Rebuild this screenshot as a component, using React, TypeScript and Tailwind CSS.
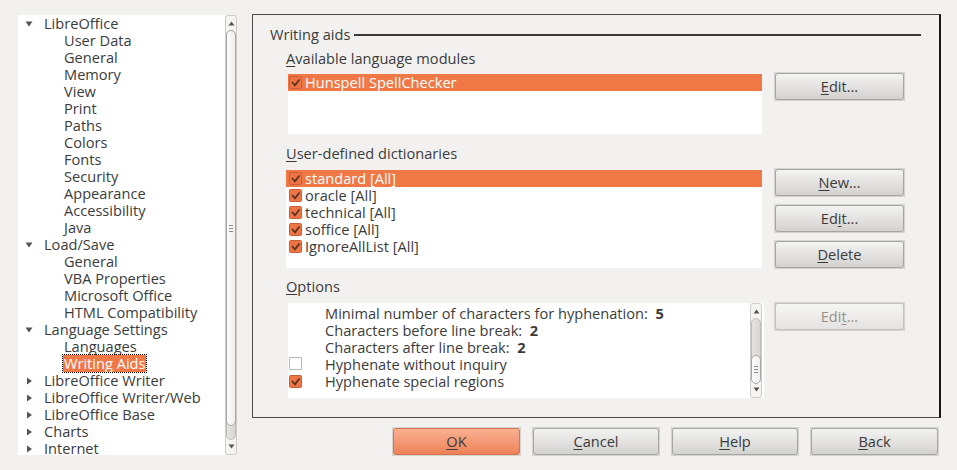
import React from 'react';

type TreeItem = { label: string; level: 1 | 2; open?: boolean; selected?: boolean };

const tree: TreeItem[] = [
  { label: 'LibreOffice', level: 1, open: true },
  { label: 'User Data', level: 2 },
  { label: 'General', level: 2 },
  { label: 'Memory', level: 2 },
  { label: 'View', level: 2 },
  { label: 'Print', level: 2 },
  { label: 'Paths', level: 2 },
  { label: 'Colors', level: 2 },
  { label: 'Fonts', level: 2 },
  { label: 'Security', level: 2 },
  { label: 'Appearance', level: 2 },
  { label: 'Accessibility', level: 2 },
  { label: 'Java', level: 2 },
  { label: 'Load/Save', level: 1, open: true },
  { label: 'General', level: 2 },
  { label: 'VBA Properties', level: 2 },
  { label: 'Microsoft Office', level: 2 },
  { label: 'HTML Compatibility', level: 2 },
  { label: 'Language Settings', level: 1, open: true },
  { label: 'Languages', level: 2 },
  { label: 'Writing Aids', level: 2, selected: true },
  { label: 'LibreOffice Writer', level: 1 },
  { label: 'LibreOffice Writer/Web', level: 1 },
  { label: 'LibreOffice Base', level: 1 },
  { label: 'Charts', level: 1 },
  { label: 'Internet', level: 1 },
];

const dictionaries = ['standard [All]', 'oracle [All]', 'technical [All]', 'soffice [All]', 'IgnoreAllList [All]'];

function Arrow({ open }: { open?: boolean }) {
  return open ? (
    <svg width="8" height="8" viewBox="0 0 8 8" className="absolute left-[7px] top-[5px]">
      <path d="M0.5 1.5 L7.5 1.5 L4 6.5 Z" fill="#555" />
    </svg>
  ) : (
    <svg width="8" height="8" viewBox="0 0 8 8" className="absolute left-[8px] top-[5px]">
      <path d="M1 0.5 L6 4 L1 7.5 Z" fill="#555" />
    </svg>
  );
}

function Check({ checked = true }: { checked?: boolean }) {
  if (!checked) {
    return (
      <span className="inline-block w-[13px] h-[13px] border border-[#b8b8b8] bg-white rounded-[1px]" />
    );
  }
  return (
    <svg width="13" height="13" viewBox="0 0 13 13" className="block">
      <rect x="0.5" y="0.5" width="12" height="12" rx="1" fill="#ee7446" stroke="#c8613a" />
      <path d="M3 6 L6 9.3 L10.5 3.5" fill="none" stroke="#5b3322" strokeWidth="1.8" />
    </svg>
  );
}

function Button({
  children,
  w = 'w-[131px]',
  primary,
  disabled,
}: {
  children: React.ReactNode;
  w?: string;
  primary?: boolean;
  disabled?: boolean;
}) {
  const inner = primary
    ? 'bg-gradient-to-b from-[#f9b091] to-[#ee8158] border-[#d57550] text-[#3c3c3c]'
    : disabled
    ? 'bg-gradient-to-b from-[#f5f5f4] to-[#e4e3e2] border-[#c4c4c4] text-[#9a8f88]'
    : 'bg-gradient-to-b from-[#f3f3f2] to-[#d3d2d1] border-[#a5a5a5] text-[#3c3c3c]';
  return (
    <div className={`${w} h-[29px] p-px bg-[#d3d3d2]`}>
      <div className={`h-full rounded-[3px] border flex items-center justify-center ${inner}`}>
        {children}
      </div>
    </div>
  );
}

function VScroll({ thumbTop, thumbH }: { thumbTop: string; thumbH: string }) {
  return (
    <div className="relative w-[12px] h-full bg-[#f5f4f3] border border-[#cdcccb] rounded-[3px]">
      <svg width="7" height="5" viewBox="0 0 7 5" className="absolute left-[2px] top-[5px]">
        <path d="M0.5 4.5 L3.5 0.5 L6.5 4.5 Z" fill="#555" />
      </svg>
      <svg width="7" height="5" viewBox="0 0 7 5" className="absolute left-[2px] bottom-[5px]">
        <path d="M0.5 0.5 L3.5 4.5 L6.5 0.5 Z" fill="#555" />
      </svg>
      <div className="absolute left-0 right-0 top-[14px] bottom-[14px] bg-gradient-to-r from-[#e4e3e1] to-[#d7d6d4] rounded-full border border-[#bdbcba]" />
      <div
        className={`absolute left-0 right-0 ${thumbTop} ${thumbH} bg-gradient-to-r from-[#fbfbfb] to-[#efefee] rounded-full border border-[#a9a8a6] flex items-center justify-center`}
      >
        <div className="flex flex-col gap-[2px]">
          <div className="w-[4px] h-px bg-[#8c8c8c]" />
          <div className="w-[4px] h-px bg-[#8c8c8c]" />
          <div className="w-[4px] h-px bg-[#8c8c8c]" />
        </div>
      </div>
    </div>
  );
}

export default function App() {
  return (
    <div className="w-[957px] h-[470px] bg-[#f2f1f0] flex font-['Open_Sans',sans-serif] text-[14.6px] leading-[17px] text-[#3c3c3c] overflow-hidden">
      {/* tree */}
      <div className="pt-[15px] pl-[18px]">
        <div className="flex w-[219px] h-[440px]">
          <div className="w-[207px] h-full bg-white overflow-hidden">
            {tree.map((t, i) => (
              <div key={i} className="relative h-[17px] whitespace-nowrap">
                {t.level === 1 && <Arrow open={t.open} />}
                <span
                  className={`absolute top-0 ${t.level === 1 ? 'left-[26px]' : 'left-[46px]'} ${
                    t.selected ? 'bg-[#f07746] text-white outline outline-1 outline-dotted outline-black px-px -ml-px' : ''
                  }`}
                >
                  {t.label}
                </span>
              </div>
            ))}
          </div>
          <VScroll thumbTop="top-[14px]" thumbH="h-[396px]" />
        </div>
      </div>

      {/* right side */}
      <div className="pt-[14px] pl-[15px] flex flex-col">
        <div className="w-[689px] h-[404px] border-l border-t border-b border-[#4b4b4b] border-r-2 border-r-[#1a1a1a] flex flex-col">
          <div className="mt-[11px] ml-[17px] mr-[18px] flex items-center gap-[4px]">
            <span>Writing aids</span>
            <div className="flex-1 h-[2px] bg-[#3a3a3a]" />
          </div>

          <div className="mt-[7px] ml-[33px]">
            <u className="underline-offset-2">A</u>vailable language modules
          </div>
          <div className="mt-[5px] flex">
            <div className="ml-[35px] mt-[2px] w-[474px] h-[60px] bg-white">
              <div className="h-[17px] bg-[#f07746] text-white flex items-center gap-[3px] pl-px">
                <Check />
                <span>Hunspell SpellChecker</span>
              </div>
            </div>
            <div className="ml-[12px]">
              <Button>
                <span>
                  <u className="underline-offset-2">E</u>dit...
                </span>
              </Button>
            </div>
          </div>

          <div className="mt-[11px] ml-[33px]">
            <u className="underline-offset-2">U</u>ser-defined dictionaries
          </div>
          <div className="mt-[6px] flex">
            <div className="ml-[33px] mt-[2px] w-[476px] h-[98px] bg-white">
              {dictionaries.map((d, i) => (
                <div
                  key={d}
                  className={`h-[17px] flex items-center gap-[3px] pl-[3px] ${i === 0 ? 'bg-[#f07746] text-white' : ''}`}
                >
                  <Check />
                  <span>{d}</span>
                </div>
              ))}
            </div>
            <div className="ml-[12px] flex flex-col gap-[7px]">
              <Button>
                <span>
                  <u className="underline-offset-2">N</u>ew...
                </span>
              </Button>
              <Button>
                <span>
                  Ed<u className="underline-offset-2">i</u>t...
                </span>
              </Button>
              <Button>
                <span>
                  <u className="underline-offset-2">D</u>elete
                </span>
              </Button>
            </div>
          </div>

          <div className="mt-[9px] ml-[33px]">
            <u className="underline-offset-2">O</u>ptions
          </div>
          <div className="mt-[7px] flex">
            <div className="ml-[35px] mt-[1px] w-[476px] h-[95px] bg-white flex">
              <div className="flex-1 pt-[2px]">
                {[
                  ['Minimal number of characters for hyphenation:', '5'],
                  ['Characters before line break:', '2'],
                  ['Characters after line break:', '2'],
                ].map(([l, v]) => (
                  <div key={l} className="h-[17px] pl-[37px] whitespace-nowrap">
                    {l}&nbsp; <b className="font-bold">{v}</b>
                  </div>
                ))}
                <div className="h-[17px] flex items-center">
                  <span className="ml-[1px] w-[36px]">
                    <Check checked={false} />
                  </span>
                  <span>Hyphenate without inquiry</span>
                </div>
                <div className="h-[17px] flex items-center">
                  <span className="ml-[1px] w-[36px]">
                    <Check />
                  </span>
                  <span>Hyphenate special regions</span>
                </div>
              </div>
              <div className="w-[14px] h-full">
                <VScroll thumbTop="top-[51px]" thumbH="h-[29px]" />
              </div>
            </div>
            <div className="ml-[10px]">
              <Button disabled>
                <span>
                  Edi<u className="underline-offset-2">t</u>...
                </span>
              </Button>
            </div>
          </div>
        </div>

        <div className="mt-[9px] flex justify-end gap-[11px] pr-[2px]">
          <Button w="w-[129px]" primary>
            <span>
              <u className="underline-offset-2">O</u>K
            </span>
          </Button>
          <Button w="w-[128px]">
            <span>
              <u className="underline-offset-2">C</u>ancel
            </span>
          </Button>
          <Button w="w-[128px]">
            <span>
              <u className="underline-offset-2">H</u>elp
            </span>
          </Button>
          <Button w="w-[129px]">
            <span>
              <u className="underline-offset-2">B</u>ack
            </span>
          </Button>
        </div>
      </div>
    </div>
  );
}
